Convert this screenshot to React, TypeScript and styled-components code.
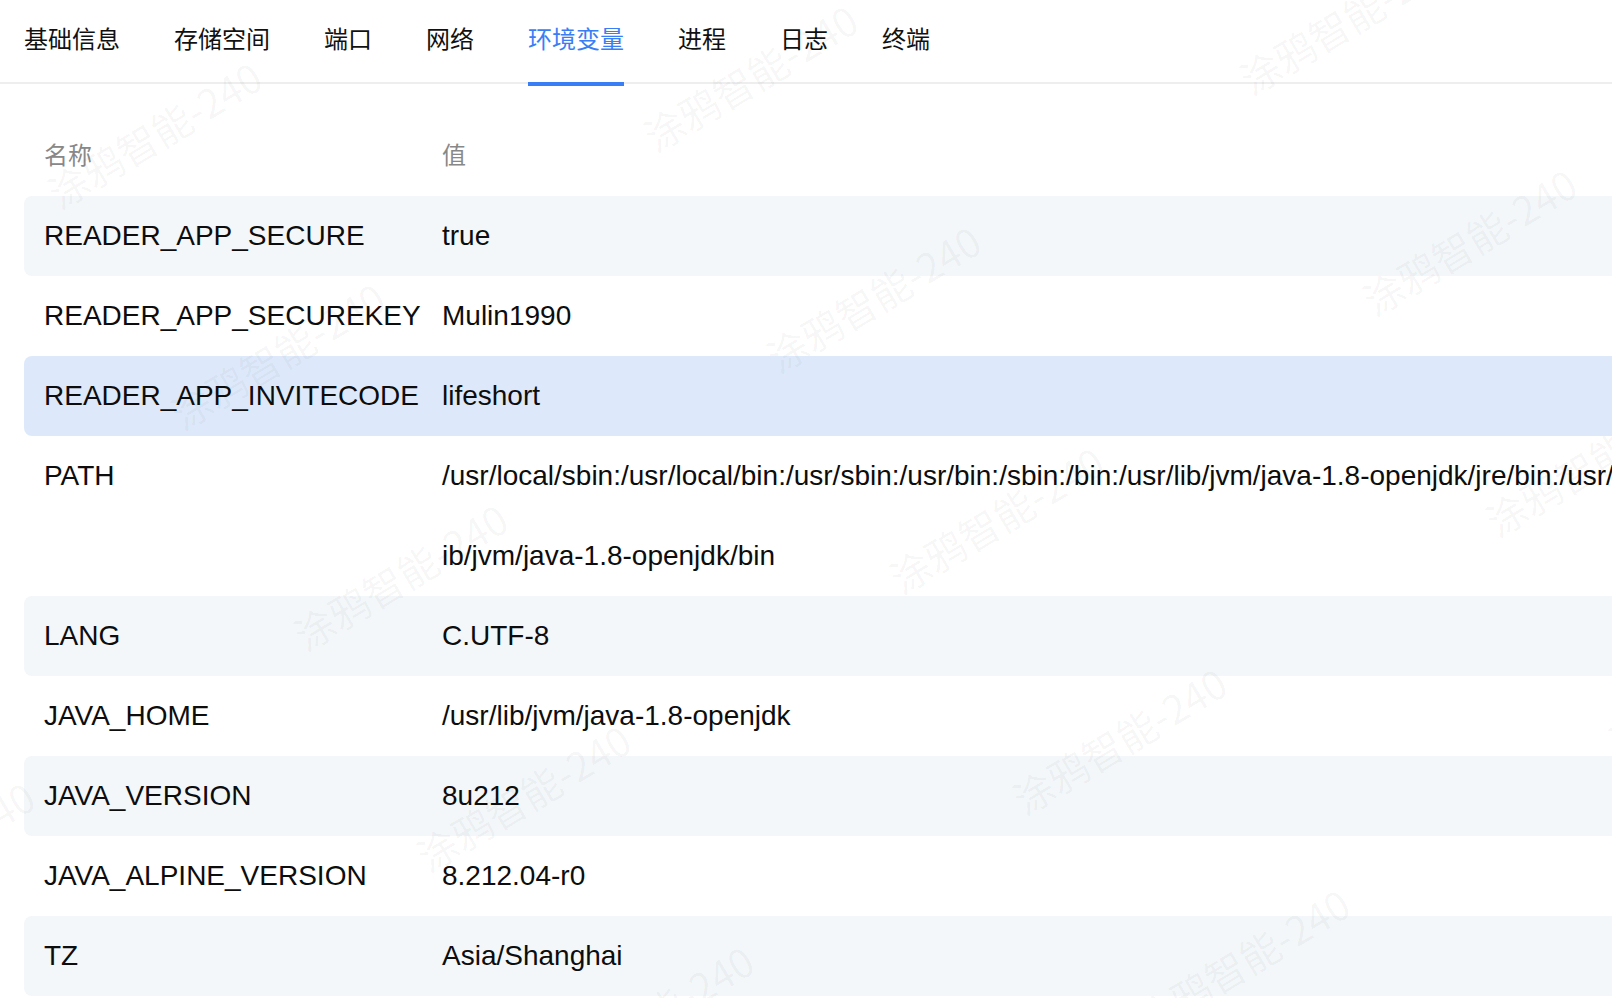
import React from "react";
import styled, { createGlobalStyle } from "styled-components";

const GlobalStyle = createGlobalStyle`
  html, body {
    margin: 0;
    padding: 0;
    background: #ffffff;
    overflow: hidden;
  }
  body {
    font-family: "Liberation Sans", Arial, "Noto Sans CJK SC", sans-serif;
    color: #0d0d0d;
  }
`;

const Page = styled.div`
  position: relative;
  width: 1612px;
  height: 998px;
  overflow: hidden;
`;

const TabBar = styled.nav`
  display: flex;
  gap: 54px;
  height: 84px;
  padding-left: 24px;
  border-bottom: 2px solid #eeeeee;
  box-sizing: border-box;
`;

const Tab = styled.div<{ $active?: boolean }>`
  position: relative;
  height: 84px;
  line-height: 76px;
  font-family: "Noto Sans CJK SC", "Liberation Sans", sans-serif;
  font-size: 24px;
  color: ${(p) => (p.$active ? "#3a7ef5" : "#111111")};
  cursor: pointer;
  &::after {
    content: "";
    display: ${(p) => (p.$active ? "block" : "none")};
    position: absolute;
    left: 0;
    right: 0;
    bottom: -2px;
    height: 4px;
    background: #3a7ef5;
  }
`;

const Table = styled.div`
  margin: 32px 0 0 24px;
  width: 1622px;
  display: flex;
  flex-direction: column;
`;

const Row = styled.div<{ $variant?: "plain" | "stripe" | "hover" }>`
  display: grid;
  grid-template-columns: 398px 1fr;
  padding: 0 20px;
  border-radius: 8px;
  line-height: 80px;
  min-height: 80px;
  font-size: 28px;
  background: ${(p) =>
    p.$variant === "stripe"
      ? "#f3f7fa"
      : p.$variant === "hover"
      ? "#dde9fa"
      : "transparent"};
`;

const HeadRow = styled(Row)`
  font-family: "Noto Sans CJK SC", "Liberation Sans", sans-serif;
  font-size: 24px;
  line-height: 76px;
  color: #888888;
`;

const NameCell = styled.div`
  white-space: nowrap;
`;

const ValueCell = styled.div`
  word-break: break-all;
`;

const WatermarkLayer = styled.div`
  position: absolute;
  inset: 0;
  pointer-events: none;
`;

const Mark = styled.span`
  position: absolute;
  transform: translate(-50%, -50%) rotate(-31deg);
  font-family: "Noto Sans CJK SC", sans-serif;
  font-size: 40px;
  white-space: nowrap;
  color: rgba(0, 0, 0, 0.04);
`;

const tabs = ["基础信息", "存储空间", "端口", "网络", "环境变量", "进程", "日志", "终端"];

const envs: [string, string][] = [
  ["READER_APP_SECURE", "true"],
  ["READER_APP_SECUREKEY", "Mulin1990"],
  ["READER_APP_INVITECODE", "lifeshort"],
  [
    "PATH",
    "/usr/local/sbin:/usr/local/bin:/usr/sbin:/usr/bin:/sbin:/bin:/usr/lib/jvm/java-1.8-openjdk/jre/bin:/usr/lib/jvm/java-1.8-openjdk/bin",
  ],
  ["LANG", "C.UTF-8"],
  ["JAVA_HOME", "/usr/lib/jvm/java-1.8-openjdk"],
  ["JAVA_VERSION", "8u212"],
  ["JAVA_ALPINE_VERSION", "8.212.04-r0"],
  ["TZ", "Asia/Shanghai"],
];

const marks: { x: number; y: number }[] = [];
for (let i = -2; i <= 3; i++) {
  for (let j = -2; j <= 6; j++) {
    const x = 154 + i * 596 + j * 123;
    const y = 134 - i * 57 + j * 221;
    if (x > -200 && x < 1800 && y > -100 && y < 1100) marks.push({ x, y });
  }
}

export default function App() {
  return (
    <Page>
      <GlobalStyle />
      <TabBar>
        {tabs.map((t) => (
          <Tab key={t} $active={t === "环境变量"}>
            {t}
          </Tab>
        ))}
      </TabBar>
      <Table>
        <HeadRow>
          <NameCell>名称</NameCell>
          <ValueCell>值</ValueCell>
        </HeadRow>
        {envs.map(([k, v], idx) => (
          <Row
            key={k}
            $variant={idx === 2 ? "hover" : idx % 2 === 0 ? "stripe" : "plain"}
          >
            <NameCell>{k}</NameCell>
            <ValueCell>{v}</ValueCell>
          </Row>
        ))}
      </Table>
      <WatermarkLayer>
        {marks.map((m, i) => (
          <Mark key={i} style={{ left: m.x, top: m.y }}>
            涂鸦智能-240
          </Mark>
        ))}
      </WatermarkLayer>
    </Page>
  );
}
